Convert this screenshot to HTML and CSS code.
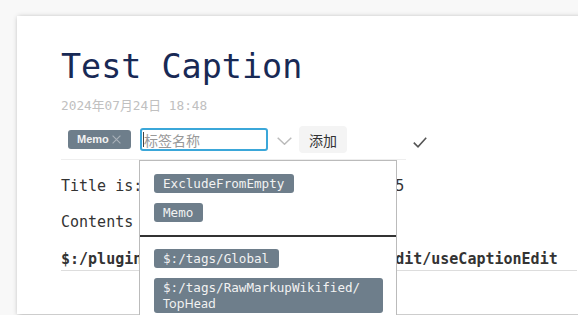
FILE: index.html
```html
<!DOCTYPE html>
<html lang="zh">
<head>
<meta charset="utf-8">
<title>Test Caption</title>
<link rel="stylesheet" href="styles.css">
</head>
<body>
<div class="card">
  <h1 class="title">Test Caption</h1>
  <div class="date">2024年07月24日 18:48</div>
  <div class="tag-row">
    <div class="tag-editor">
      <span class="tag tag-current"><span class="tag-name">Memo</span><svg class="tag-x" width="9" height="9" viewBox="0 0 9 9"><path d="M0.6 0.6 L8.4 8.4 M8.4 0.6 L0.6 8.4"/></svg></span>
      <div class="input-wrap">
        <input class="tag-input" type="text" placeholder="标签名称">
        <span class="caret"></span>
        <div class="dropdown">
          <div class="dd-group">
            <span class="tag dd-tag">ExcludeFromEmpty</span>
            <span class="tag dd-tag">Memo</span>
          </div>
          <div class="dd-sep"></div>
          <div class="dd-group">
            <span class="tag dd-tag">$:/tags/Global</span>
            <span class="tag dd-tag">$:/tags/RawMarkupWikified/<wbr><span class="alt">TopHead</span></span>
          </div>
        </div>
      </div>
      <svg class="chevron" width="15" height="8" viewBox="0 0 15 8"><polyline points="0.7,0.7 7.5,7.2 14.3,0.7"/></svg>
      <button class="add-btn" type="button">添加</button>
    </div>
    <svg class="check" width="14" height="11" viewBox="0 0 14 11"><polyline points="0.8,5.6 5,9.8 13.2,0.8"/></svg>
  </div>
  <p class="line">Title is: Test Caption, modified 18:45</p>
  <p class="line">Contents is: Memo</p>
  <p class="line path">$:/plugins/linonetwo/caption-inline-edit/useCaptionEdit</p>
</div>
</body>
</html>
```

FILE: styles.css
```css
html, body {
  margin: 0;
  overflow: hidden;
}

body {
  background: #f8f8f8;
  padding: 16px 0 0 17px;
  height: 315px;
  box-sizing: border-box;
  font-family: "DejaVu Sans Mono", "Noto Sans CJK SC", monospace;
  color: #333;
}

.card {
  width: 604px;
  height: 298px;
  box-sizing: border-box;
  background: #fff;
  box-shadow: 1px 1px 5px rgba(0, 0, 0, 0.3);
  padding: 30.5px 44px 0;
}

.title {
  margin: 0;
  font-size: 33.4px;
  line-height: 40px;
  font-weight: normal;
  color: #182955;
}

.date {
  margin-top: 10px;
  font-size: 12.8px;
  line-height: 18px;
  color: #c0c0c0;
}

.tag-row {
  display: flex;
  align-items: center;
  margin-top: 11.5px;
}

.tag-editor {
  width: 345px;
  display: flex;
  align-items: center;
  padding-bottom: 6px;
  border-bottom: 1px solid #eee;
}

.tag {
  display: inline-block;
  background: #6e7e8b;
  color: #f2f2f2;
  border-radius: 3px;
}

.tag-current {
  flex: none;
  margin-left: 7px;
  width: 63px;
  height: 19px;
  box-sizing: border-box;
  padding: 0 0 0 9px;
  font-family: "Liberation Sans", sans-serif;
  font-weight: bold;
  font-size: 11px;
  line-height: 19px;
  display: flex;
  align-items: center;
  overflow: hidden;
}

.tag-name {
  width: 30px;
  white-space: nowrap;
}

.tag-x {
  flex: none;
  margin-left: 5px;
  fill: none;
  stroke: #a9b1b9;
  stroke-width: 1.1;
}

.input-wrap {
  flex: none;
  position: relative;
  margin-left: 9px;
  width: 128px;
  height: 23px;
}

.tag-input {
  display: block;
  width: 128px;
  height: 23px;
  box-sizing: border-box;
  margin: 0;
  border: 2px solid #3ba7d9;
  border-radius: 3px;
  padding: 0 2px;
  font-family: "Noto Sans CJK SC", sans-serif;
  font-size: 14px;
  color: #333;
  outline: none;
  background: #fff;
}

.tag-input::placeholder {
  color: #999;
}

.caret {
  position: absolute;
  left: 2.5px;
  top: 4px;
  width: 1px;
  height: 15px;
  background: #444;
}

.dropdown {
  position: absolute;
  left: -1px;
  top: 32px;
  width: 258px;
  box-sizing: border-box;
  background: #fff;
  border: 1px solid #bbb;
  padding: 13px 0 10px;
  z-index: 10;
}

.dd-group {
  display: flex;
  flex-direction: column;
  align-items: flex-start;
  gap: 10px;
  padding: 0 13px 0 14px;
}

.dd-tag {
  font-size: 12.6px;
  line-height: 16px;
  padding: 1.5px 10px 1.5px 9px;
}

.alt {
  font-family: "Noto Sans", sans-serif;
}

.dd-sep {
  height: 2px;
  background: #333;
  margin: 13px 0 12px;
}

.chevron {
  flex: none;
  margin-left: 9px;
  margin-top: 3px;
  fill: none;
  stroke: #bbb;
  stroke-width: 1.5;
}

.add-btn {
  flex: none;
  margin-left: 7px;
  height: 27px;
  padding: 0 10px;
  border: none;
  border-radius: 4px;
  background: #f4f4f4;
  font-family: "Noto Sans CJK SC", sans-serif;
  font-size: 14px;
  color: #333;
}

.check {
  margin-left: 7px;
  margin-top: -2px;
  fill: none;
  stroke: #555;
  stroke-width: 1.6;
}

.line {
  margin: 14.5px 0;
  font-size: 15px;
  line-height: 22px;
  white-space: nowrap;
}

.path {
  font-weight: bold;
  border-bottom: 1px solid #ddd;
}
```
